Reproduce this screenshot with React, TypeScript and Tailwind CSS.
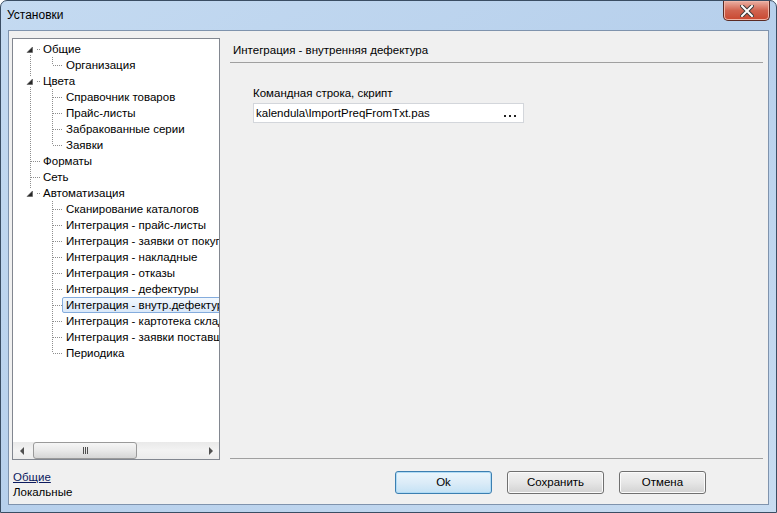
import type { ReactNode } from "react";

type TreeNode = {
  label: string;
  selected?: boolean;
  children?: TreeNode[];
};

type Row = {
  label: string;
  level: 0 | 1;
  expander: boolean;
  first: boolean;
  last: boolean;
  rootContinues: boolean;
  selected: boolean;
};

const tree: TreeNode[] = [
  { label: "Общие", children: [{ label: "Организация" }] },
  {
    label: "Цвета",
    children: [
      { label: "Справочник товаров" },
      { label: "Прайс-листы" },
      { label: "Забракованные серии" },
      { label: "Заявки" },
    ],
  },
  { label: "Форматы" },
  { label: "Сеть" },
  {
    label: "Автоматизация",
    children: [
      { label: "Сканирование каталогов" },
      { label: "Интеграция - прайс-листы" },
      { label: "Интеграция - заявки от покупателей" },
      { label: "Интеграция - накладные" },
      { label: "Интеграция - отказы" },
      { label: "Интеграция - дефектуры" },
      { label: "Интеграция - внутр.дефектура", selected: true },
      { label: "Интеграция - картотека склада" },
      { label: "Интеграция - заявки поставщикам" },
      { label: "Периодика" },
    ],
  },
];

function flatten(nodes: TreeNode[]): Row[] {
  const rows: Row[] = [];
  nodes.forEach((node, i) => {
    const rootLast = i === nodes.length - 1;
    rows.push({
      label: node.label,
      level: 0,
      expander: !!node.children,
      first: i === 0,
      last: rootLast,
      rootContinues: false,
      selected: !!node.selected,
    });
    node.children?.forEach((child, j) => {
      rows.push({
        label: child.label,
        level: 1,
        expander: false,
        first: j === 0,
        last: j === node.children!.length - 1,
        rootContinues: !rootLast,
        selected: !!child.selected,
      });
    });
  });
  return rows;
}

const DOT = "#8e8e8e";

function Guides({ row }: { row: Row }) {
  if (row.level === 0) {
    return (
      <svg width={28} height={16} className="shrink-0">
        <line
          x1={17.5}
          x2={17.5}
          y1={row.first ? 8 : 0}
          y2={row.last ? 8 : 16}
          stroke={DOT}
          strokeDasharray="1 1"
        />
        <line
          x1={row.expander ? 24 : 18}
          x2={28}
          y1={8.5}
          y2={8.5}
          stroke={DOT}
          strokeDasharray="1 1"
        />
        {row.expander && (
          <>
            <rect x={12} y={3} width={10} height={10} fill="#fff" />
            <polygon points="19.5,6 19.5,11.5 14,11.5" fill="#262626" stroke="#595959" strokeWidth={0.6} />
          </>
        )}
      </svg>
    );
  }
  return (
    <svg width={49} height={16} className="shrink-0">
      {row.rootContinues && (
        <line x1={17.5} x2={17.5} y1={0} y2={16} stroke={DOT} strokeDasharray="1 1" />
      )}
      <line
        x1={39.5}
        x2={39.5}
        y1={0}
        y2={row.last ? 8 : 16}
        stroke={DOT}
        strokeDasharray="1 1"
      />
      <line x1={40} x2={49} y1={8.5} y2={8.5} stroke={DOT} strokeDasharray="1 1" />
    </svg>
  );
}

function TreeRow({ row }: { row: Row }) {
  return (
    <div className="flex h-[16px] items-center whitespace-nowrap">
      <Guides row={row} />
      <span
        className={
          row.selected
            ? "rounded-[2px] border border-[#84acdd] bg-gradient-to-b from-[#f2f8fe] to-[#d9e8f9] pl-[3px] pr-[3px] leading-[14px]"
            : row.level === 0
              ? "border border-transparent pl-[1px] pr-[3px] leading-[14px]"
              : "border border-transparent pl-[3px] pr-[3px] leading-[14px]"
        }
      >
        {row.label}
      </span>
    </div>
  );
}

function Arrow({ dir }: { dir: "left" | "right" }) {
  return (
    <svg width={6} height={8} viewBox="0 0 6 8">
      {dir === "left" ? (
        <polygon points="5,0 5,8 1,4" fill="#505050" />
      ) : (
        <polygon points="1,0 1,8 5,4" fill="#505050" />
      )}
    </svg>
  );
}

function HScrollBar() {
  return (
    <div className="flex h-[17px] shrink-0 items-stretch bg-gradient-to-b from-[#e9e9e9] via-[#f3f3f3] to-[#ececec]">
      <div className="flex w-[17px] items-center justify-center">
        <Arrow dir="left" />
      </div>
      <div className="flex flex-1 items-stretch pl-[3px]">
        <div className="flex w-[104px] items-center justify-center rounded-[3px] border border-[#9a9a9a] bg-gradient-to-b from-[#f6f6f6] via-[#e9e9e9] to-[#d6d6d6]">
          <div className="flex gap-[1px]">
            <div className="h-[7px] w-[1px] bg-[#4f4f4f]" />
            <div className="h-[7px] w-[1px] bg-[#4f4f4f]" />
            <div className="h-[7px] w-[1px] bg-[#4f4f4f]" />
          </div>
        </div>
      </div>
      <div className="flex w-[17px] items-center justify-center">
        <Arrow dir="right" />
      </div>
    </div>
  );
}

function Button({ children, width, primary }: { children: ReactNode; width: string; primary?: boolean }) {
  return (
    <div
      className={
        "flex h-[23px] items-center justify-center rounded-[3px] border " +
        width +
        (primary
          ? " border-[#3c7fb1] bg-gradient-to-b from-[#eaf6fd] via-[#dcecf8] to-[#c4e2f5] shadow-[inset_0_0_0_1px_#b0dbf5]"
          : " border-[#707070] bg-gradient-to-b from-[#f2f2f2] via-[#e6e6e6] to-[#d2d2d2] shadow-[inset_0_0_0_1px_#fbfbfb]")
      }
    >
      {children}
    </div>
  );
}

function CloseButton() {
  return (
    <div className="mr-[6px] flex h-[20px] w-[47px] items-center justify-center self-start rounded-b-[5px] border border-t-0 border-[#5b2b24] bg-gradient-to-b from-[#eab0a4] via-[#d1634f] to-[#c9472f] shadow-[inset_0_0_0_1px_#f0b6a8]">
      <svg width={14} height={12} viewBox="0 0 14 12">
        <path d="M2 1 L12 11 M12 1 L2 11" stroke="#3b3b3b" strokeWidth={4} strokeLinecap="square" />
        <path d="M2 1 L12 11 M12 1 L2 11" stroke="#ffffff" strokeWidth={2} strokeLinecap="square" />
      </svg>
    </div>
  );
}

export default function App() {
  const rows = flatten(tree);

  return (
    <div
      className="flex h-[513px] w-[777px] flex-col rounded-t-[7px] border border-[#3a4d63] bg-gradient-to-br from-[#c4daf1] via-[#b7d0ec] to-[#c8dcf1] text-[11.5px] text-black"
      style={{ fontFamily: '"Liberation Sans", Arial, sans-serif' }}
    >
      {/* title bar */}
      <div className="flex h-[29px] shrink-0 items-start justify-between">
        <div className="pl-[6px] pt-[7px] text-[12px] leading-[15px]">Установки</div>
        <CloseButton />
      </div>

      {/* client area */}
      <div className="mx-[7px] mb-[7px] flex min-h-0 flex-1 border border-[#7f93ad] bg-[#f0f0f0]">
        {/* left column: tree and scope links */}
        <div className="flex w-[211px] shrink-0 flex-col pl-[3px] pt-[7px]">
          <div className="flex h-[422px] w-[208px] flex-col border border-[#828790] bg-white">
            <div className="flex-1 overflow-hidden pt-[2px]">
              {rows.map((row) => (
                <TreeRow key={row.label} row={row} />
              ))}
            </div>
            <HScrollBar />
          </div>
          <div className="mt-[10px] pl-[1px] leading-[15px]">
            <div className="text-[#0c1a5e] underline underline-offset-[1px]">Общие</div>
            <div>Локальные</div>
          </div>
        </div>

        {/* right column: settings page */}
        <div className="ml-[10px] mr-[5px] flex flex-1 flex-col">
          <div className="h-[31px] shrink-0 pl-[3px] pt-[12px] leading-[14px]">
            Интеграция - внутренняя дефектура
          </div>
          <div className="h-px shrink-0 bg-[#a0a0a0]" />

          <div className="flex-1 pl-[23px]">
            <div className="mt-[23px] leading-[14px]">Командная строка, скрипт</div>
            <div className="mt-[3px] flex h-[20px] w-[271px] items-center justify-between border border-[#d3d6db] bg-white pl-[2px] pr-[7px]">
              <span className="leading-[14px]">kalendula\ImportPreqFromTxt.pas</span>
              <div className="mt-[5px] flex gap-[3px]">
                <div className="h-[2px] w-[2px] bg-[#222]" />
                <div className="h-[2px] w-[2px] bg-[#222]" />
                <div className="h-[2px] w-[2px] bg-[#222]" />
              </div>
            </div>
          </div>

          <div className="h-px shrink-0 bg-[#a0a0a0]" />
          <div className="flex h-[45px] shrink-0 items-start gap-[15px] pl-[165px] pt-[12px]">
            <Button width="w-[97px]" primary>
              Ok
            </Button>
            <Button width="w-[97px]">Сохранить</Button>
            <Button width="w-[87px]">Отмена</Button>
          </div>
        </div>
      </div>
    </div>
  );
}
